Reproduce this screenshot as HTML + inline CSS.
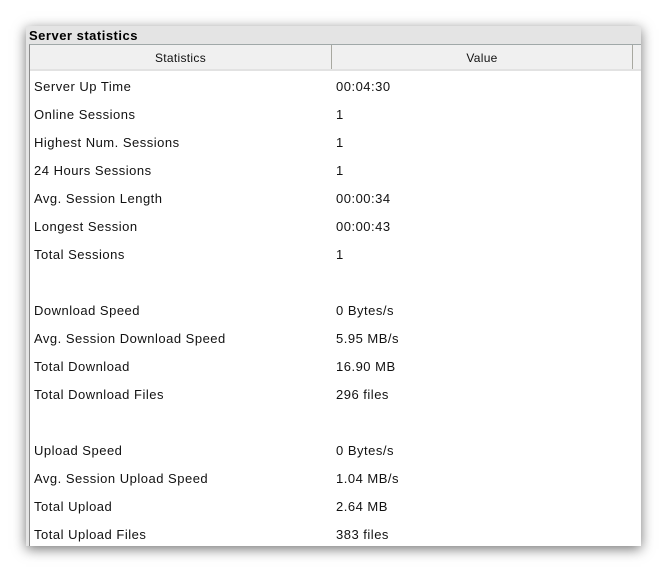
<!DOCTYPE html><html><head><style>
body{margin:0;width:667px;height:572px;background:#fff;position:relative;overflow:hidden;font-family:"Liberation Sans",sans-serif}
.win{position:absolute;left:26px;top:26px;width:615px;height:520px;background:#e4e4e4;box-shadow:0 3px 12px rgba(0,0,0,.55);overflow:hidden}
.title{position:absolute;left:3px;top:2px;font-weight:bold;font-size:13px;color:#000;letter-spacing:0.5px}
.tbl{position:absolute;left:3px;top:18px;width:612px;height:502px;background:#fff;border-left:1px solid #8a8a8a;border-top:1px solid #a0a8a8}
.hd{position:absolute;left:0;top:0;width:612px;height:24px;background:#f0f0f0;border-bottom:2px solid #e2e2e2;font-size:12px;color:#111;letter-spacing:0.3px}
.hd div{position:absolute;top:0;height:24px;line-height:26px;text-align:center;border-right:1px solid #a8a8a0}
.r{position:absolute;left:0;height:28px;line-height:30px;font-size:13px;color:#111;width:600px;letter-spacing:0.5px}
.r span{position:absolute}
.a{left:4px}.b{left:306px}
</style></head><body>
<div class="win"><div class="title">Server statistics</div>
<div class="tbl">
<div class="hd"><div style="left:0;width:301px">Statistics</div><div style="left:302px;width:300px">Value</div></div>
<div class="r" style="top:27px"><span class="a">Server Up Time</span><span class="b">00:04:30</span></div>
<div class="r" style="top:55px"><span class="a">Online Sessions</span><span class="b">1</span></div>
<div class="r" style="top:83px"><span class="a">Highest Num. Sessions</span><span class="b">1</span></div>
<div class="r" style="top:111px"><span class="a">24 Hours Sessions</span><span class="b">1</span></div>
<div class="r" style="top:139px"><span class="a">Avg. Session Length</span><span class="b">00:00:34</span></div>
<div class="r" style="top:167px"><span class="a">Longest Session</span><span class="b">00:00:43</span></div>
<div class="r" style="top:195px"><span class="a">Total Sessions</span><span class="b">1</span></div>
<div class="r" style="top:251px"><span class="a">Download Speed</span><span class="b">0 Bytes/s</span></div>
<div class="r" style="top:279px"><span class="a">Avg. Session Download Speed</span><span class="b">5.95 MB/s</span></div>
<div class="r" style="top:307px"><span class="a">Total Download</span><span class="b">16.90 MB</span></div>
<div class="r" style="top:335px"><span class="a">Total Download Files</span><span class="b">296 files</span></div>
<div class="r" style="top:391px"><span class="a">Upload Speed</span><span class="b">0 Bytes/s</span></div>
<div class="r" style="top:419px"><span class="a">Avg. Session Upload Speed</span><span class="b">1.04 MB/s</span></div>
<div class="r" style="top:447px"><span class="a">Total Upload</span><span class="b">2.64 MB</span></div>
<div class="r" style="top:475px"><span class="a">Total Upload Files</span><span class="b">383 files</span></div>
</div></div>
</body></html>
